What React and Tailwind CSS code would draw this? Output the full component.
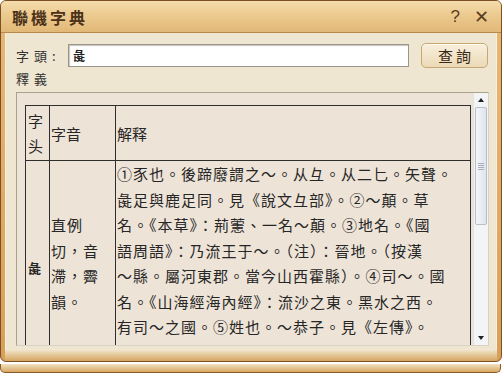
export default function App() {
  const lines = [
    "①豕也。後蹄廢謂之～。从彑。从二匕。矢聲。",
    "彘足與鹿足同。見《說文彑部》。②～顛。草",
    "名。《本草》：荊藼、一名～顛。③地名。《國",
    "語周語》：乃流王于～。（注）：晉地。（按漢",
    "～縣。屬河東郡。當今山西霍縣）。④司～。國",
    "名。《山海經海內經》：流沙之東。黑水之西。",
    "有司～之國。⑤姓也。～恭子。見《左傳》。",
  ];
  return (
    <div className="w-[504px] h-[373px] bg-white overflow-hidden font-['Noto_Sans_CJK_TC','Noto_Sans_CJK_SC',sans-serif]">
      <div className="w-[502px] h-[362px] flex flex-col rounded-[6px] border border-[#7d5024] bg-[linear-gradient(180deg,#e9b877_0%,#d99f57_100%)] overflow-hidden">
        {/* title bar */}
        <div className="h-[32px] shrink-0 flex items-center justify-between pl-[11px] pr-[12px] bg-[linear-gradient(180deg,#f4dcac_0%,#ecca8f_45%,#e2b877_100%)] border-b border-[#b98a4e]">
          <span className="text-[16px] leading-none font-bold tracking-[3px] text-[#4b3219]">聯機字典</span>
          <div className="flex items-center gap-[14px] text-[#5b3d1e] text-[17px] leading-none font-['Liberation_Sans',sans-serif]">
            <span>?</span>
            <span className="text-[18px]">✕</span>
          </div>
        </div>
        {/* body */}
        <div className="flex-1 flex flex-col mx-[4px] bg-[#efe6d1] border-x border-[#f8f1e2]">
          <div className="flex items-center pt-[10px] pl-[10px]">
            <span className="w-[52px] text-[13px] tracking-[5px] text-[#333]">字頭:</span>
            <div className="w-[341px] h-[23px] bg-white border border-[#9a958c] shadow-[inset_1px_1px_1px_#c8c4bc] flex items-center pl-[4px] text-[12px] font-bold text-[#222]">彘</div>
            <button className="ml-[12px] w-[67px] h-[25px] rounded-[5px] border border-[#c6a673] bg-[linear-gradient(180deg,#f8efdd_0%,#ecdab6_100%)] shadow-[inset_0_1px_0_#fffaf0] text-[15px] tracking-[3px] pl-[3px] text-[#3a2a18] leading-none">查詢</button>
          </div>
          <div className="mt-[2px] h-[18px] leading-[18px] pl-[10px] text-[13px] tracking-[5px] text-[#333]">釋義</div>
          <div className="mt-[4px] ml-[10px] mr-[7px] h-[254px] flex border border-[#aaa192] border-r-[#d9d2c4] border-b-[#d9d2c4] bg-[#ede3d7]">
            <div className="flex-1 overflow-hidden pl-[8px] pt-[12px]">
              <table className="table-fixed border-collapse w-[445px] border border-[#2e2e2e] text-[15px] text-[#262626]">
                <colgroup>
                  <col className="w-[24px]" />
                  <col className="w-[66px]" />
                  <col className="w-[355px]" />
                </colgroup>
                <thead>
                  <tr>
                    <th className="border border-[#2e2e2e] font-normal text-left align-middle leading-[25px] px-[2px] py-[2px]">字头</th>
                    <th className="border border-[#2e2e2e] font-normal text-left align-middle leading-[25px] px-[1px] py-[2px]">字音</th>
                    <th className="border border-[#2e2e2e] font-normal text-left align-middle leading-[25px] px-[1px] py-[2px]">解释</th>
                  </tr>
                </thead>
                <tbody>
                  <tr>
                    <td className="border border-[#2e2e2e] align-middle px-[2px] pt-[8px] text-[13px] font-bold">彘</td>
                    <td className="border border-[#2e2e2e] align-middle px-[1px] leading-[25.5px] tracking-[1px]">直例切，音滯，霽韻。</td>
                    <td className="border border-[#2e2e2e] align-top px-[1px] pb-[26px] leading-[25.5px] tracking-[1px] whitespace-nowrap">
                      {lines.map((l, i) => (
                        <div key={i}>{l}</div>
                      ))}
                    </td>
                  </tr>
                </tbody>
              </table>
            </div>
            {/* scrollbar */}
            <div className="w-[15px] shrink-0 flex flex-col bg-[#f3f4f6] border-l border-[#e2e2e2]">
              <div className="h-[14px] flex items-center justify-center">
                <div className="w-0 h-0 border-x-[3.5px] border-x-transparent border-b-[4px] border-b-[#222]" />
              </div>
              <div className="mx-[1px] h-[118px] rounded-[2px] border border-[#b9bec8] bg-[linear-gradient(90deg,#f4f6f9_0%,#dfe4ec_100%)] flex flex-col items-center justify-center gap-[1px]">
                <div className="w-[6px] h-px bg-[#a9afba]" />
                <div className="w-[6px] h-px bg-[#a9afba]" />
                <div className="w-[6px] h-px bg-[#a9afba]" />
                <div className="w-[6px] h-px bg-[#a9afba]" />
              </div>
              <div className="flex-1" />
              <div className="h-[14px] flex items-center justify-center">
                <div className="w-0 h-0 border-x-[3.5px] border-x-transparent border-t-[4px] border-t-[#222]" />
              </div>
            </div>
          </div>
        </div>
        {/* bottom frame */}
        <div className="h-[12px] shrink-0 mx-[4px] bg-[linear-gradient(180deg,#f3ead6_0%,#e6cfa3_40%,#d6a460_100%)]" />
      </div>
      <div className="mt-[2px] w-[501px] h-[9px] rounded-b-[5px] border border-t-0 border-[#8a5a2b] bg-[linear-gradient(180deg,#f0e2c4_0%,#d9a862_100%)]" />
    </div>
  );
}
